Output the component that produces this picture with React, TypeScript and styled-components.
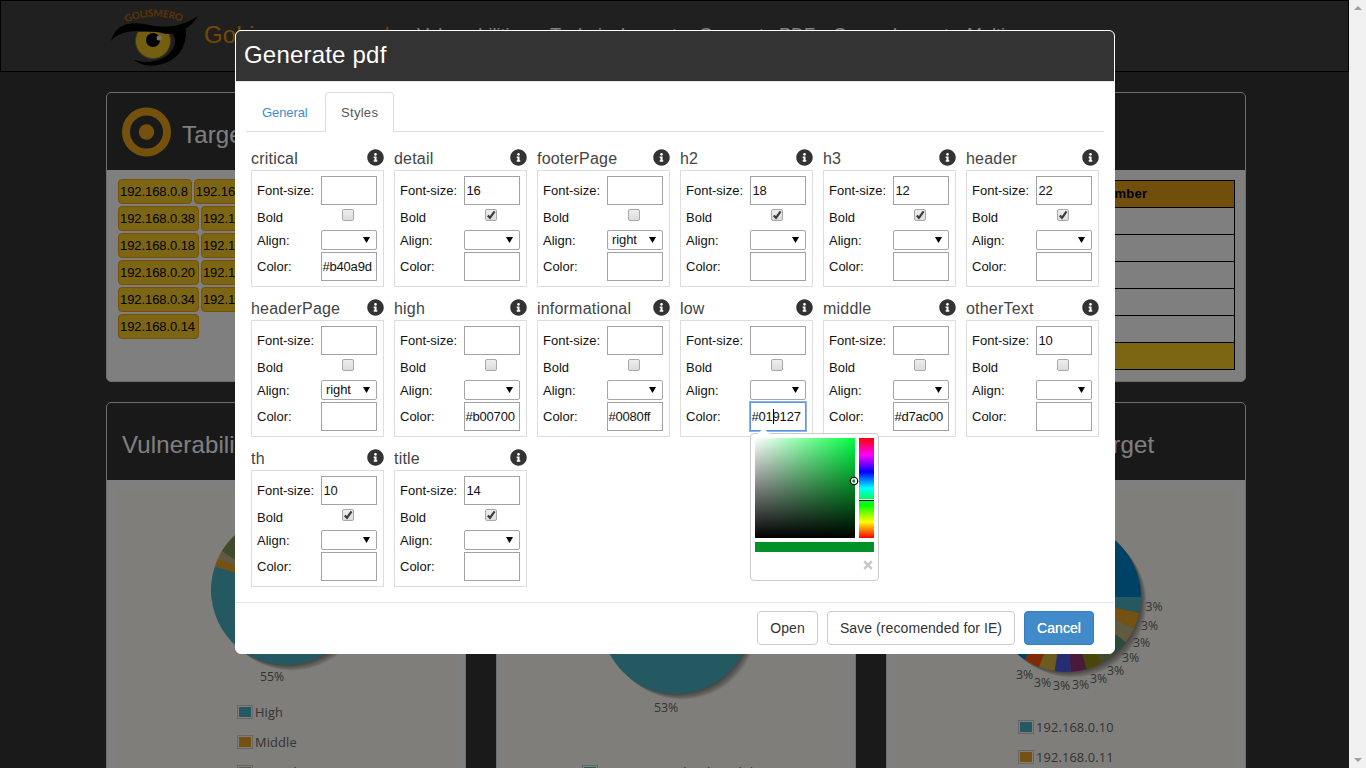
import React from "react";
import styled, { createGlobalStyle, css } from "styled-components";
import { FaInfoCircle } from "react-icons/fa";

const GlobalStyle = createGlobalStyle`
  * { box-sizing: border-box; }
  html, body { margin: 0; height: 768px; overflow: hidden; background: #333; }
  body, input, select, button { font-family: "Liberation Sans", Arial, sans-serif; }
`;

const Window = styled.div`
  display: flex;
  width: 1366px;
  height: 768px;
  overflow: hidden;
`;
const Page = styled.div`
  flex: 1;
  height: 768px;
  overflow: hidden;
  background: #343434;
`;
const Scrollbar = styled.div`
  width: 17px;
  height: 768px;
  background: #f1f1f1;
  display: flex;
  flex-direction: column;
  justify-content: space-between;
  align-items: center;
  padding: 6px 0;
`;
const Arrow = styled.i<{ $down?: boolean }>`
  border: 4px solid transparent;
  ${(p) => (p.$down ? css`border-top-color: #a0a0a0; border-bottom: 0;` : css`border-bottom-color: #a0a0a0; border-top: 0;`)}
`;

const TopBar = styled.header`
  height: 72px;
  background: #404040;
  border: 1px solid #000;
  display: flex;
  align-items: flex-start;
  padding: 6px 0 0 108px;
  white-space: nowrap;
`;
const Brand = styled.div`
  font-size: 24px;
  line-height: 28px;
  color: #e8900c;
  width: 213px;
  margin: 14px 0 0 5px;
`;
const NavLink = styled.a<{ $w: number }>`
  font-size: 18px;
  line-height: 20px;
  color: #fff;
  width: ${(p) => p.$w}px;
  margin-top: 18px;
`;
const Board = styled.main`
  width: 1140px;
  margin: 20px 0 0 106px;
  display: flex;
  flex-direction: column;
  gap: 20px;
`;
const BoardRow = styled.div<{ $cols: string; $h: number }>`
  display: grid;
  grid-template-columns: ${(p) => p.$cols};
  gap: 30px;
  height: ${(p) => p.$h}px;
`;
const Card = styled.section`
  border: 1px solid #ddd;
  border-radius: 5px;
  background: #fff;
  overflow: hidden;
`;
const CardHead = styled.div`
  height: 77px;
  background: #333;
  color: #fff;
  font-size: 24px;
  line-height: 28px;
  letter-spacing: 0.15px;
  display: flex;
  align-items: center;
  gap: 10px;
  padding: 7px 15px 0;
  white-space: nowrap;
  svg { margin-top: -7px; }
`;
const Chips = styled.div`
  padding: 9px 0 0 11px;
  display: flex;
  flex-wrap: wrap;
  gap: 2px;
`;
const Chip = styled.span`
  height: 25px;
  padding: 0 3px 0 1px;
  border: 1px solid #f0a010;
  border-radius: 4px;
  background: #f8cd28;
  color: #000;
  font-size: 13px;
  line-height: 23px;
  letter-spacing: -0.08px;
`;
const Table = styled.div`
  margin: 10px;
  border: 1px solid #000;
  border-bottom: 0;
`;
const TableRow = styled.div<{ $bg?: string }>`
  display: grid;
  grid-template-columns: 1fr 224px;
  height: 27px;
  border-bottom: 1px solid #000;
  background: ${(p) => p.$bg || "#fff"};
  font: bold 13px/26px "Liberation Sans", Arial, sans-serif;
  letter-spacing: 0.2px;
  text-align: center;
`;
const Plot = styled.div`
  margin: 10px 9px;
  height: 400px;
  background: #fffdf6;
`;
const PlotArt = styled.svg`
  display: block;
  text { font: 12.3px "Open Sans", "Noto Sans", sans-serif; fill: #666; }
`;
const Legend = styled.div<{ $left: number }>`
  display: grid;
  gap: 12px;
  padding-left: ${(p) => p.$left}px;
`;
const LegendItem = styled.div`
  display: flex;
  align-items: center;
  height: 18px;
  gap: 2px;
  color: #666;
  font: 12.8px/18px "Open Sans", "Noto Sans", sans-serif;
  letter-spacing: 0.15px;
  white-space: nowrap;
`;
const Swatch = styled.i<{ $c: string }>`
  width: 16px;
  height: 14px;
  border: 1px solid #ccc;
  padding: 1px;
  background: ${(p) => p.$c} content-box;
`;

const Backdrop = styled.div`
  position: absolute;
  inset: 0 17px 0 0;
  background: rgba(0, 0, 0, 0.5);
`;
const Modal = styled.div`
  position: absolute;
  left: 235px;
  top: 30px;
  width: 880px;
  height: 624px;
  border: 1px solid #fff;
  border-radius: 6px;
  background: #fff;
  display: flex;
  flex-direction: column;
`;
const ModalHead = styled.div`
  height: 51px;
  border-bottom: 1px solid #e5e5e5;
  border-radius: 5px 5px 0 0;
  background: #333;
  color: #fff;
  font-size: 24px;
  line-height: 48px;
  padding-left: 8px;
  letter-spacing: 0.2px;
`;
const Tabs = styled.div`
  display: flex;
  height: 40px;
  margin: 10px 10px 0;
  border-bottom: 1px solid #ddd;
`;
const Tab = styled.div<{ $active?: boolean }>`
  height: 40px;
  border: 1px solid transparent;
  border-radius: 4px 4px 0 0;
  padding: 0 15px;
  font-size: 13px;
  line-height: 39px;
  color: #428bca;
  width: 78px;
  letter-spacing: -0.1px;
  ${(p) =>
    p.$active &&
    css`
      width: 69px;
      margin-left: 1px;
      letter-spacing: 0.3px;
      color: #555;
      background: #fff;
      border-color: #ddd #ddd #fff;
    `}
`;
const StyleGrid = styled.div`
  flex: 1;
  display: grid;
  grid-template-columns: repeat(6, 133px);
  grid-auto-rows: 140px;
  gap: 10px;
  padding: 16px 15px 0;
  align-content: start;
`;
const CellHead = styled.div`
  height: 22px;
  display: flex;
  justify-content: space-between;
  align-items: flex-start;
  font-size: 16px;
  line-height: 22px;
  letter-spacing: 0.2px;
  color: #444;
  svg { color: #333; margin-top: 1px; }
`;
const CellBox = styled.div`
  height: 117px;
  border: 1px solid #ddd;
  padding: 5px;
  display: grid;
  grid-template-columns: 64px 56px;
  grid-template-rows: 29px 25px 20px 31px;
  font-size: 13px;
  color: #111;
`;
const Label = styled.label<{ $dy?: number }>`
  align-self: center;
  line-height: 16px;
  padding-top: ${(p) => p.$dy || 0}px;
`;
const Field = styled.div<{ $focus?: boolean; $left: number }>`
  position: relative;
  align-self: end;
  width: 56px;
  height: 29px;
  border: 1px solid #a2a2a2;
  background: #fff;
  padding-left: ${(p) => p.$left}px;
  line-height: 27px;
  letter-spacing: -0.2px;
  ${(p) => p.$focus && css`border-color: #5b93e6; box-shadow: 0 0 0 1px #8fb3ec;`}
`;
const Caret = styled.i`
  display: inline-block;
  width: 1px;
  height: 15px;
  margin-right: -1px;
  background: #000;
  vertical-align: -3px;
`;
const Check = styled.span`
  width: 12px;
  height: 12px;
  margin: 4px 0 0 21px;
  border: 1px solid #a8a8a8;
  border-radius: 2px;
  background: linear-gradient(#eee, #dcdcdc);
  svg { display: block; overflow: visible; }
`;
const Select = styled.div`
  height: 20px;
  border: 1px solid #a6a6a6;
  border-radius: 2px;
  display: flex;
  justify-content: space-between;
  align-items: center;
  padding: 0 6px 0 4px;
  line-height: 18px;
  letter-spacing: -0.1px;
  svg { margin-top: -1px; }
`;
const Picker = styled.div`
  position: absolute;
  z-index: 2;
  left: -1px;
  top: 30px;
  width: 129px;
  height: 148px;
  border: 1px solid #ccc;
  border-radius: 4px;
  background: #fff;
  padding: 4px;
  display: grid;
  grid-template-columns: 100px 15px;
  grid-template-rows: 100px 10px 20px;
  gap: 4px;
`;
const Notch = styled.svg`
  position: absolute;
  left: 6px;
  top: -7px;
`;
const Saturation = styled.div`
  position: relative;
  background: linear-gradient(to top, #000, transparent), linear-gradient(to right, #fff, #00ff43);
`;
const Dot = styled.svg`
  position: absolute;
  left: 94px;
  top: 38px;
`;
const Hue = styled.div`
  position: relative;
  background: linear-gradient(to bottom, #f00, #f0f 17%, #00f 34%, #0ff 50%, #0f0 67%, #ff0 84%, #f00);
`;
const HueMark = styled.i`
  position: absolute;
  left: 0;
  top: 61px;
  width: 15px;
  height: 2px;
  border-top: 1px solid #fff;
  background: #000;
`;
const Preview = styled.div`
  grid-column: 1 / 3;
  background: #019127;
`;
const Close = styled.div`
  grid-column: 1 / 3;
  display: flex;
  justify-content: flex-end;
  padding: 4px 1px 0 0;
`;
const Footer = styled.div`
  height: 51px;
  border-top: 1px solid #e5e5e5;
  padding: 8px 20px 0 0;
  display: flex;
  justify-content: flex-end;
  gap: 9px;
`;
const Button = styled.button<{ $primary?: boolean; $w: number }>`
  width: ${(p) => p.$w}px;
  height: 34px;
  padding: 0;
  border: 1px solid ${(p) => (p.$primary ? "#357ebd" : "#ccc")};
  border-radius: 4px;
  background: ${(p) => (p.$primary ? "#428bca" : "#fff")};
  color: ${(p) => (p.$primary ? "#fff" : "#333")};
  font-size: 14px;
  letter-spacing: 0.08px;
  white-space: nowrap;
  ${(p) => p.$primary && css`text-shadow: 0 0 0.6px #fff;`}
`;

type Slice = { to: number; color: string };
type PieLabel = [number, number, string];

function wedge(cx: number, cy: number, r: number, from: number, to: number) {
  const pt = (a: number) => {
    const t = (a * Math.PI) / 180;
    return `${cx + r * Math.cos(t)} ${cy + r * Math.sin(t)}`;
  };
  return `M${cx} ${cy}L${pt(from)}A${r} ${r} 0 ${to - from > 180 ? 1 : 0} 1 ${pt(to)}Z`;
}

function Pie({ cy, height, slices, labels }: { cy: number; height: number; slices: Slice[]; labels: PieLabel[] }) {
  const cx = 170;
  return (
    <PlotArt width="340" height={height}>
      {[6, 5, 4, 3, 2, 1].map((d) => (
        <circle key={d} cx={cx + d} cy={cy + d} r="74.5" fill="#000" opacity="0.09" />
      ))}
      {slices.map((s, i) => (
        <path key={i} d={wedge(cx, cy, 75, i ? slices[i - 1].to : 0, s.to)} fill={s.color} />
      ))}
      {labels.map(([x, y, t], i) => (
        <text key={i} x={x} y={y} textAnchor="middle">{t}</text>
      ))}
    </PlotArt>
  );
}

function Logo() {
  return (
    <svg width="90" height="60" viewBox="109 7 90 60">
      <defs>
        <path id="arc" d="M126 22.5Q153 11 182 22" />
      </defs>
      <text fontFamily="Lato, sans-serif" fontSize="10" fontWeight="700" fill="#b8690a">
        <textPath href="#arc" textLength="57">GOLISMERO</textPath>
      </text>
      <circle cx="153" cy="41" r="17.5" fill="#e8bd20" stroke="#8a7430" />
      <circle cx="153" cy="40" r="7" fill="#000" />
      <circle cx="159" cy="38" r="2.5" fill="#e6e6e6" />
      <path d="M130 22H180V32L134 32Z" fill="#404040" />
      <path d="M111 41C115 26 127 21 144 24C166 29 181 27 198 16C190 29 180 33 166 34C146 29 120 29 111 41Z" fill="#000" />
      <path d="M186 29C187 51 174 62 158 65C147 67 139 64 134 60C148 64 161 61 169 54C176 47 177 39 172 33Z" fill="#000" />
    </svg>
  );
}

type StyleDef = { name: string; size?: string; bold?: boolean; align?: string; color?: string; open?: boolean };
const styleDefs: StyleDef[] = [
  { name: "critical", color: "#b40a9d" },
  { name: "detail", size: "16", bold: true },
  { name: "footerPage", align: "right" },
  { name: "h2", size: "18", bold: true },
  { name: "h3", size: "12", bold: true },
  { name: "header", size: "22", bold: true },
  { name: "headerPage", align: "right" },
  { name: "high", color: "#b00700" },
  { name: "informational", color: "#0080ff" },
  { name: "low", color: "#019127", open: true },
  { name: "middle", color: "#d7ac00" },
  { name: "otherText", size: "10" },
  { name: "th", size: "10", bold: true },
  { name: "title", size: "14", bold: true },
];

function ColorPicker() {
  return (
    <Picker>
      <Notch width="13" height="8"><path d="M0 7.5L6.5 1L13 7.5V8H0Z" fill="#fff" /></Notch>
      <Saturation>
        <Dot width="10" height="10">
          <circle cx="5" cy="5" r="3.6" fill="none" stroke="#000" strokeWidth="1.4" />
          <circle cx="5" cy="5" r="2.4" fill="none" stroke="#fff" strokeWidth="1.2" />
        </Dot>
      </Saturation>
      <Hue><HueMark /></Hue>
      <Preview />
      <Close>
        <svg width="10" height="10"><path d="M1.2 1.2L8.8 8.8M8.8 1.2L1.2 8.8" stroke="#c8c8c8" strokeWidth="2.4" /></svg>
      </Close>
    </Picker>
  );
}

function StyleCell({ name, size, bold, align, color, open }: StyleDef) {
  return (
    <div>
      <CellHead>{name}<FaInfoCircle size={17} /></CellHead>
      <CellBox>
        <Label>Font-size:</Label>
        <Field $left={1.5}>{size}</Field>
        <Label>Bold</Label>
        <Check>
          {bold && (
            <svg width="10" height="10"><path d="M1.8 5.4L4 7.8L8.6 1.4" fill="none" stroke="#3c3c3c" strokeWidth="2.2" /></svg>
          )}
        </Check>
        <Label $dy={1}>Align:</Label>
        <Select>
          <span>{align}</span>
          <svg width="7" height="6"><path d="M0 0H7L3.5 6Z" fill="#000" /></svg>
        </Select>
        <Label $dy={2}>Color:</Label>
        <Field $left={0.5} $focus={open}>
          {open ? <>{color!.slice(0, 3)}<Caret />{color!.slice(3)}<ColorPicker /></> : color}
        </Field>
      </CellBox>
    </div>
  );
}

const hosts = [8, 16, 12, 15, 38, 11, 17, 13, 18, 19, 21, 22, 20, 10, 23, 24, 34, 25, 26, 27, 14].map((n) => `192.168.0.${n}`);
const palette = ["#4bb2c5", "#eaa228", "#c5b47f", "#579575", "#839557", "#958c12", "#953579", "#4b5de4", "#d8b83f", "#ff5800"];
const targetSlices: Slice[] = [...palette.map((color, i) => ({ to: (i + 1) * 12.35, color })), { to: 360, color: "#0085cc" }];
const targetLabels: PieLabel[] = [
  [258, 121, "3%"], [253.5, 140, "3%"], [245.5, 157, "3%"], [234.5, 172, "3%"], [219.5, 185, "3%"],
  [202.5, 193, "3%"], [184.5, 199, "3%"], [165.5, 200, "3%"], [146.5, 197, "3%"], [128.5, 189, "3%"],
];

function ChartCard({ title, children, legend, left }: { title: string; children: React.ReactNode; legend: [string, string][]; left: number }) {
  return (
    <Card>
      <CardHead>{title}</CardHead>
      <Plot>
        {children}
        <Legend $left={left}>
          {legend.map(([c, t]) => <LegendItem key={t}><Swatch $c={c} />{t}</LegendItem>)}
        </Legend>
      </Plot>
    </Card>
  );
}

export default function App() {
  return (
    <>
      <GlobalStyle />
      <Window>
        <Page>
          <TopBar>
            <Logo />
            <Brand>GoLismero report</Brand>
            <NavLink $w={133}>Vulnerabilities</NavLink>
            <NavLink $w={149}>Technical report</NavLink>
            <NavLink $w={134}>Generate PDF</NavLink>
            <NavLink $w={134}>General report</NavLink>
            <NavLink $w={80}>Multi</NavLink>
          </TopBar>
          <Board>
            <BoardRow $cols="360px 750px" $h={290}>
              <Card>
                <CardHead>
                  <svg width="50" height="50">
                    <circle cx="24.5" cy="25" r="20.5" fill="none" stroke="#eaa21c" strokeWidth="8" />
                    <circle cx="24.5" cy="25" r="7.7" fill="#eaa21c" />
                  </svg>
                  Targets
                </CardHead>
                <Chips>{hosts.map((h) => <Chip key={h}>{h}</Chip>)}</Chips>
              </Card>
              <Card>
                <CardHead>Summary</CardHead>
                <Table>
                  <TableRow $bg="#e49c1a"><span>Level</span><span>Number</span></TableRow>
                  {[0, 1, 2, 3, 4].map((i) => <TableRow key={i} />)}
                  <TableRow $bg="#f8cd28" />
                </Table>
              </Card>
            </BoardRow>
            <BoardRow $cols="360px 360px 360px" $h={500}>
              <ChartCard title="Vulnerabilities by level" left={121} legend={[["#4bb2c5", "High"], ["#eaa228", "Middle"], ["#c5b47f", "Critical"]]}>
                <Pie
                  cy={100}
                  height={213}
                  slices={[{ to: 198.5, color: palette[0] }, { to: 205, color: palette[1] }, { to: 211, color: palette[2] }, { to: 360, color: palette[4] }]}
                  labels={[[156, 191, "55%"]]}
                />
              </ChartCard>
              <ChartCard title="Vulnerabilities" left={76} legend={[["#4bb2c5", "uncategorized_vulnerability"]]}>
                <Pie cy={129} height={273} slices={[{ to: 191, color: palette[0] }, { to: 360, color: palette[1] }]} labels={[[160, 222, "53%"]]} />
              </ChartCard>
              <ChartCard title="Vulnerabilities by target" left={122} legend={[["#4bb2c5", "192.168.0.10"], ["#eaa228", "192.168.0.11"]]}>
                <Pie cy={107} height={228} slices={targetSlices} labels={targetLabels} />
              </ChartCard>
            </BoardRow>
          </Board>
        </Page>
        <Scrollbar><Arrow /><Arrow $down /></Scrollbar>
      </Window>
      <Backdrop />
      <Modal>
        <ModalHead>Generate pdf</ModalHead>
        <Tabs>
          <Tab>General</Tab>
          <Tab $active>Styles</Tab>
        </Tabs>
        <StyleGrid>{styleDefs.map((d) => <StyleCell key={d.name} {...d} />)}</StyleGrid>
        <Footer>
          <Button $w={61}>Open</Button>
          <Button $w={188}>Save (recomended for IE)</Button>
          <Button $w={70} $primary>Cancel</Button>
        </Footer>
      </Modal>
    </>
  );
}
